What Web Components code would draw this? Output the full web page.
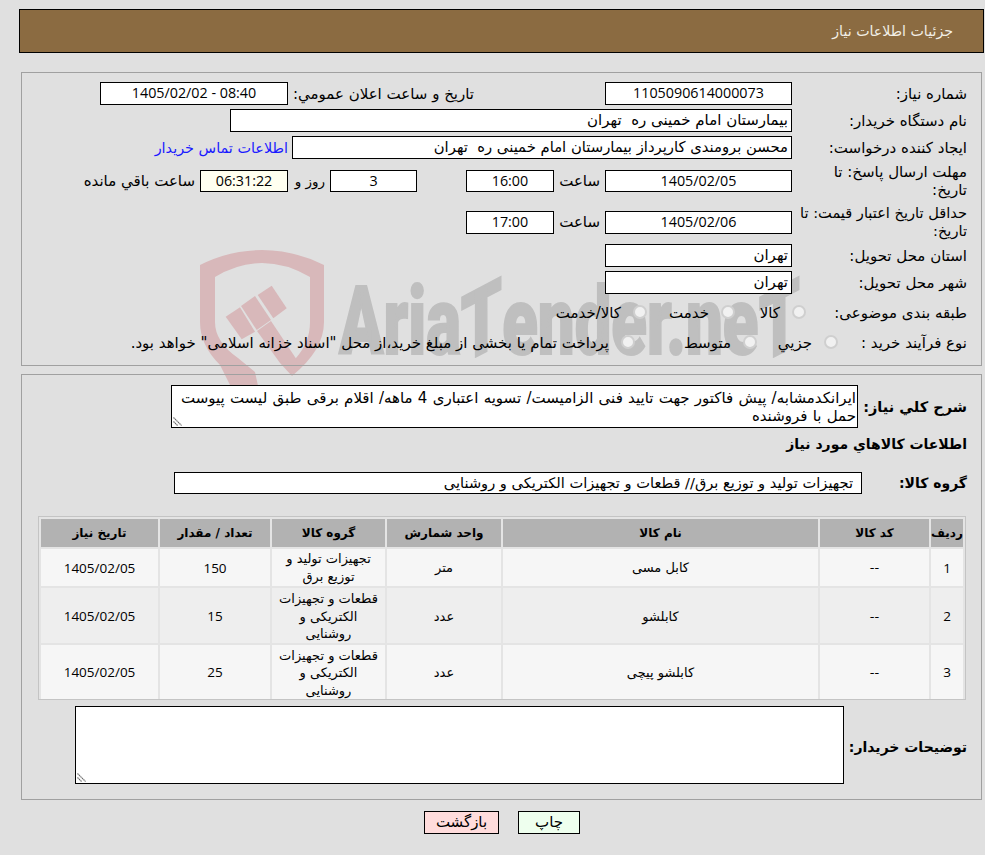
<!DOCTYPE html>
<html lang="fa" dir="rtl">
<head>
<meta charset="utf-8">
<title>جزئیات اطلاعات نیاز</title>
<style>
  html, body { margin: 0; padding: 0; }
  body {
    background: #e0e0e0;
    color: #000;
    font: 15px/18px Tahoma, "DejaVu Sans", sans-serif;
    position: relative;
    height: 855px;
    overflow: hidden;
  }
  .txt { display: block; box-sizing: border-box; padding-right: 5px; white-space: nowrap; flex: none; }
  a { color: #1a1aff; text-decoration: none; }
</style>
</head>
<body>
<template id="row-tpl">
  <style>
    :host { display: flex; align-items: center; height: var(--h, 23px); margin-top: var(--mt, 4px); }
    .label { flex: none; box-sizing: border-box; width: var(--label, 175px); line-height: 18px; white-space: nowrap; font-weight: var(--lw, normal); font-size: var(--lf, 15px); padding-top: var(--lp, 0); }
    .body { display: flex; align-items: center; flex: 1; min-width: 0; }
  </style>
  <div class="label"><slot name="label"></slot></div>
  <div class="body"><slot></slot></div>
</template>

<script>
// ردیف فرم و جعبه ها
class NeedHeader extends HTMLElement {
  constructor() {
    super()
    this.attachShadow({mode: 'open'}).innerHTML = `
      <style>
        :host { display: flex; align-items: center; box-sizing: border-box; height: 44px; margin: 9px 1px 0 19px; padding: 0 30px 1px 0;
          background: #8b6b41; border: 1px solid #000; color: #f2efe6; font-size: 14.2px; }
      </style><slot></slot>`
  }
}
class NeedPanel extends HTMLElement {
  constructor() {
    super()
    this.attachShadow({mode: 'open'}).innerHTML = `
      <style>
        :host { display: block; box-sizing: border-box; margin: var(--top, 0) 3px 0 21px; height: var(--height, auto); padding: var(--pad, 9px) 14px 0 0; border: 1px solid #a0a0a0; }
      </style><slot></slot>`
  }
}
class NeedRow extends HTMLElement {
  constructor() {
    super()
    this.attachShadow({mode: 'open'}).appendChild(document.getElementById('row-tpl').content.cloneNode(true))
  }
}
class NeedBox extends HTMLElement {
  constructor() {
    super()
    this.attachShadow({mode: 'open'}).innerHTML = `
      <style>
        :host { display: flex; align-items: center; justify-content: center; flex: none; box-sizing: border-box; height: var(--bh, 23px); width: var(--w, 187px);
          background: var(--bg, #fff); border: 1px solid #000; padding: 0 3px 1px; white-space: pre; }
        :host([start]) { justify-content: flex-start; }
        :host([num]) { font-family: "Open Sans", "DejaVu Sans", sans-serif; font-size: 14.3px; direction: ltr; }
      </style><slot></slot>`
  }
}
class NeedChoice extends HTMLElement {
  constructor() {
    super()
    const mark = this.hasAttribute('square') ? 'square' : this.hasAttribute('checked') ? 'on' : ''
    this.attachShadow({mode: 'open'}).innerHTML = `
      <style>
        :host { display: flex; align-items: center; flex: none; width: var(--w, auto); }
        i { display: block; flex: none; box-sizing: border-box; width: 14px; height: 14px; margin-top: -2px; border-radius: 50%; background: #f1f1f1; border: 2px solid #cfcfcf; position: relative; }
        i.square { border-radius: 3px; border-width: 1px; background: #f4f4f4; }
        i.on::after { content: ""; position: absolute; inset: 2px; border-radius: 50%; background: #bdbdbd; }
        span { margin-right: var(--gap, 12px); white-space: nowrap; }
      </style><i class="${mark}"></i><span><slot></slot></span>`
  }
}
class NeedArea extends HTMLElement {
  constructor() {
    super()
    this.attachShadow({mode: 'open'}).innerHTML = `
      <style>
        :host { display: block; flex: none; box-sizing: border-box; position: relative; width: var(--w); height: var(--bh); background: #fff; border: 1px solid #000; padding: 3px 1px 0 0; white-space: nowrap; line-height: 18px; }
        svg { position: absolute; left: 0; bottom: 0; display: block; }
      </style><slot></slot>
      <svg width="12" height="12" viewBox="0 0 12 12" fill="none" stroke="#666" stroke-width="1.1">
        <path d="M1.5 2.5L9.5 10.5M1.5 6.5L5.5 10.5" stroke-dasharray="1.5 .6"/>
      </svg>`
  }
}
class NeedButton extends HTMLElement {
  constructor() {
    super()
    this.attachShadow({mode: 'open'}).innerHTML = `
      <style>
        :host { display: flex; align-items: center; justify-content: center; box-sizing: border-box; height: 23px; width: var(--w); background: var(--bg); border: 1px solid #000; padding-bottom: 1px; cursor: pointer; }
      </style><slot></slot>`
  }
}
class NeedTable extends HTMLElement {
  static get cols() { return [32, 109, 315, 114, 113, 110, 117] }
  static get heads() { return ['رديف', 'کد کالا', 'نام کالا', 'واحد شمارش', 'گروه کالا', 'تعداد / مقدار', 'تاریخ نیاز'] }
  static get rows() {
    return [
      ['1', '--', 'کابل مسی', 'متر', 'تجهیزات تولید و<br>توزیع برق', '150', '1405/02/05'],
      ['2', '--', 'کابلشو', 'عدد', 'قطعات و تجهیزات<br>الکتریکی و<br>روشنایی', '15', '1405/02/05'],
      ['3', '--', 'کابلشو پیچی', 'عدد', 'قطعات و تجهیزات<br>الکتریکی و<br>روشنایی', '25', '1405/02/05']
    ]
  }
  constructor() {
    super()
    this.attachShadow({mode: 'open'})
  }
  connectedCallback() {
    const cols = NeedTable.cols.map(w => `<col style="width:${w}px">`).join('')
    const head = NeedTable.heads.map(t => `<th>${t}</th>`).join('')
    const heights = [37, 53, 54]
    const body = NeedTable.rows.map((r, i) =>
      `<tr style="height:${heights[i]}px" class="${i % 2 ? 'even' : 'odd'} r${i}">${r.map(t => `<td>${t}</td>`).join('')}</tr>`).join('')
    this.shadowRoot.innerHTML = `
      <style>
        :host { display: block; box-sizing: border-box; width: 928px; height: 184px; margin: 22px 0 0 0; position: relative; right: 1px; border: 1px solid #c4c4c4; background: #e4e4e4; }
        table { border-collapse: separate; border-spacing: 2px; table-layout: fixed; width: 926px; font-size: 13px; line-height: 18px; }
        th { height: 28px; padding: 0; background: #b2b2b2; font-weight: bold; font-size: 12px; }
        td { padding: 0; text-align: center; vertical-align: middle; }
        tr.r1 td, tr.r2 td { padding-top: 2px; box-sizing: border-box; line-height: 17.5px; }
        tr.odd td { background: #f6f6f6; }
        tr.even td { background: #eee; }
        td:nth-child(1), td:nth-child(6), td:nth-child(7) { font-family: "Open Sans", "DejaVu Sans", sans-serif; font-size: 13.5px; }
      </style>
      <table><colgroup>${cols}</colgroup><tr>${head}</tr>${body}</table>`
  }
}
class AriaWatermark extends HTMLElement {
  constructor() {
    super()
    this.attachShadow({mode: 'open'}).innerHTML = `
      <style>
        :host { display: block; position: absolute; left: 0; top: 0; width: 985px; height: 450px; z-index: -1; pointer-events: none; }
        svg { position: absolute; left: 200px; top: 250px; }
        .word { position: absolute; left: 339px; top: 272px; font: 900 94px/100px Roboto, "DejaVu Sans", sans-serif; color: #bfbfbf; -webkit-text-stroke: 2px #bfbfbf;
          white-space: nowrap; direction: ltr; transform-origin: 0 50%; transform: scaleX(.695); }
        b { display: inline-block; font-weight: 900; transform: skewY(-20deg); }
      </style>
      <svg width="125" height="150" viewBox="0 0 125 150" fill="#d8b8ba">
        <path d="M0 15Q30 0 62 0Q94 0 124 15V72Q124 100 92 126L96 108Q110 92 110 72V27Q86 13 62 13Q38 13 15 27V72Q15 92 38 108L55 122L60 145H35L20 115Q0 95 0 72Z"/>
        <path d="M25.7 66.7L40 57.3L55 81.7L41.7 89.3Z"/>
        <path d="M41 56L55 46L71 70L56.7 80Z"/>
        <path d="M57.7 45L71.7 35.7L86.7 58.3L73.3 68.3Z"/>
        <path d="M57 81L71 71L97 110L92 126L80 113Z"/>
      </svg>
      <span class="word">Aria<b>T</b>ender.ne<b>T</b></span>`
  }
}

customElements.define('need-header', NeedHeader)
customElements.define('need-panel', NeedPanel)
customElements.define('need-row', NeedRow)
customElements.define('need-box', NeedBox)
customElements.define('need-choice', NeedChoice)
customElements.define('need-area', NeedArea)
customElements.define('need-button', NeedButton)
customElements.define('need-table', NeedTable)
customElements.define('aria-watermark', AriaWatermark)
</script>

<aria-watermark></aria-watermark>

<need-header>جزئیات اطلاعات نیاز</need-header>

<need-panel style="--top:19px;--height:294px">
  <need-row style="--mt:0">
    <span slot="label">شماره نیاز:</span>
    <need-box num>1105090614000073</need-box>
    <span class="txt" style="width:317px;padding-right:131px">تاریخ و ساعت اعلان عمومي:</span>
    <need-box num style="--w:188px">1405/02/02 - 08:40</need-box>
  </need-row>
  <need-row>
    <span slot="label">نام دستگاه خریدار:</span>
    <need-box start style="--w:562px">بیمارستان امام خمینی ره  تهران</need-box>
  </need-row>
  <need-row>
    <span slot="label">ایجاد کننده درخواست:</span>
    <need-box start style="--w:500px;font-size:14.8px">محسن برومندی کارپرداز بیمارستان امام خمینی ره  تهران</need-box>
    <a class="txt" href="#" style="padding-right:4px;font-size:14.4px">اطلاعات تماس خریدار</a>
  </need-row>
  <need-row style="--h:36px">
    <span slot="label">مهلت ارسال پاسخ: تا<br>تاریخ:</span>
    <need-box num style="--bh:22px">1405/02/05</need-box>
    <span class="txt" style="width:51px">ساعت</span>
    <need-box num style="--w:88px;--bh:22px">16:00</need-box>
    <need-box num style="--w:87px;--bh:22px;margin-right:49px">3</need-box>
    <span class="txt" style="width:42px;font-size:13.5px">روز و</span>
    <need-box num style="--w:88px;--bh:22px;--bg:#fffff0">06:31:22</need-box>
    <span class="txt">ساعت باقي مانده</span>
  </need-row>
  <need-row style="--h:36px;--mt:5px;--lf:14.6px">
    <span slot="label">حداقل تاریخ اعتبار قیمت: تا<br>تاریخ:</span>
    <need-box num>1405/02/06</need-box>
    <span class="txt" style="width:51px;font-size:15px">ساعت</span>
    <need-box num style="--w:88px">17:00</need-box>
  </need-row>
  <need-row>
    <span slot="label">استان محل تحویل:</span>
    <need-box start>تهران</need-box>
  </need-row>
  <need-row>
    <span slot="label">شهر محل تحویل:</span>
    <need-box start>تهران</need-box>
  </need-row>
  <need-row style="--h:20px;--mt:9px;--label:161px">
    <span slot="label">طبقه بندی موضوعی:</span>
    <need-choice checked style="--w:71px">کالا</need-choice>
    <need-choice style="--w:88px">خدمت</need-choice>
    <need-choice>کالا/خدمت</need-choice>
  </need-row>
  <need-row style="--h:20px;--mt:10px;--label:129px">
    <span slot="label">نوع فرآیند خرید :</span>
    <need-choice checked style="--w:81px">جزيي</need-choice>
    <need-choice style="--w:122px">متوسط</need-choice>
    <need-choice square>پرداخت تمام یا بخشی از مبلغ خرید،از محل "اسناد خزانه اسلامی" خواهد بود.</need-choice>
  </need-row>
</need-panel>

<need-panel style="--top:8px;--height:426px;--pad:10px">
  <need-row style="--h:43px;--mt:0;--label:109px;--lw:bold;--lf:14.5px">
    <span slot="label">شرح کلي نیاز:</span>
    <need-area style="--w:687px;--bh:43px;word-spacing:.5px">ایرانکدمشابه/ پیش فاکتور جهت تایید فنی الزامیست/ تسویه اعتباری 4 ماهه/ اقلام برقی طبق لیست پیوست<br>حمل با فروشنده</need-area>
  </need-row>
  <need-row style="--h:18px;--mt:7px;--lw:bold;--label:300px;--lf:14px">
    <span slot="label">اطلاعات کالاهاي مورد نیاز</span>
  </need-row>
  <need-row style="--mt:19px;--label:105px;--lw:bold;--h:22px;--lf:14px">
    <span slot="label">گروه کالا:</span>
    <need-box start style="--w:688px;--bh:22px;padding-right:8px;font-size:14.6px">تجهیزات تولید و توزیع برق// قطعات و تجهیزات الکتریکی و روشنایی</need-box>
  </need-row>
  <need-table></need-table>
  <need-row style="--h:78px;--mt:6px;--label:123px;--lw:bold;--lf:14px;--lp:4px">
    <span slot="label">توضیحات خریدار:</span>
    <need-area style="--w:769px;--bh:78px"></need-area>
  </need-row>
</need-panel>

<div style="display:flex;justify-content:center;gap:19px;margin:11px 405px 0 0;width:156px">
  <need-button style="--w:62px;--bg:#eeffee">چاپ</need-button>
  <need-button style="--w:75px;--bg:#ffdcdc">بازگشت</need-button>
</div>
</body>
</html>
